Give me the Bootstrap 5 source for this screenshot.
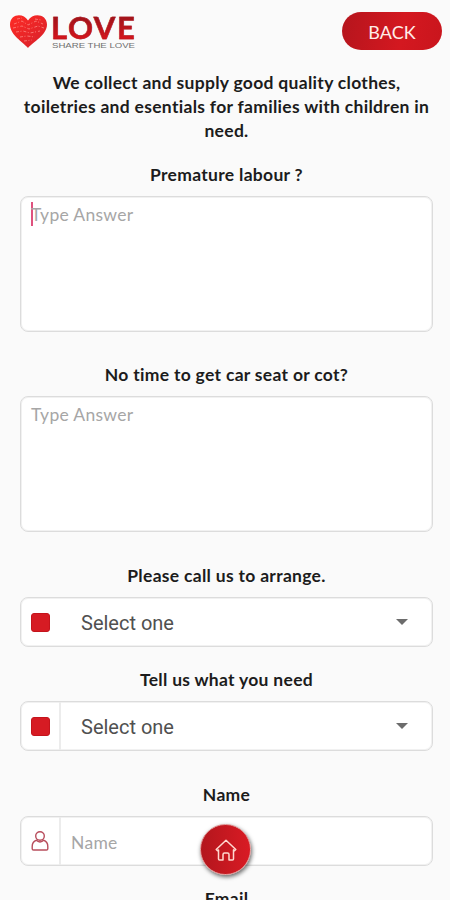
<!DOCTYPE html>
<html lang="en">
<head>
<meta charset="utf-8">
<meta name="viewport" content="width=device-width, initial-scale=1">
<title>Love - Share the Love</title>
<link href="https://cdn.jsdelivr.net/npm/bootstrap@5.3.0/dist/css/bootstrap.min.css" rel="stylesheet">
<style>
body{background:#fafafa;color:#1c1c1c;font-family:Lato,"Open Sans",sans-serif;}
.screen{width:450px;height:900px;}
.topbar{height:71px;padding:10px 8px 0 9px;}
.heart{margin-top:1px;}
.word{font:bold 31px/26px Lato,sans-serif;letter-spacing:1.6px;margin:4px 0 0 -1px;-webkit-text-stroke:.4px #ad161c;background:linear-gradient(#98131a,#d8151c);-webkit-background-clip:text;background-clip:text;color:transparent;}
.back{width:100px;height:38px;margin-top:2px;border-radius:19px;background:linear-gradient(100deg,#b5151d,#d41820 60%,#c9151d);color:#ffece8;font-size:18px;line-height:40px;}
.form-area{padding:0 17px 0 20px;}
.q{font-size:17.500px;line-height:24px;font-weight:700;letter-spacing:.3px;margin:0 0 9px;white-space:nowrap;}
.intro{margin-bottom:20px;}
.box{border:1px solid #dcdcdc;box-shadow:inset 0 0 0 1px #f1f1f1;border-radius:8px;background:#fff;}
.area{height:136px;padding:6px 9px 6px 10px;}
.line{height:50px;}
.gap-m{margin-bottom:31px;}
.gap-l{margin-bottom:32px;}
.gap-s{margin-bottom:21px;}
.hint{color:#a6a6a6;font-size:17.500px;line-height:24px;letter-spacing:.3px;}
.caret{width:2px;height:24px;margin:-1px -2px 0 0;background:#df527e;}
.lead-cell{width:40px;border-right:2px solid transparent;}
.ruled{border-right-color:#ececec;}
.sq{width:19px;height:19px;border-radius:3px;background:#d61b23;border:1px solid #c4141c;}
.pick{font:20px/24px Roboto,sans-serif;color:#505050;padding:1px 0 0 20px;}
.arrow{border:6px solid transparent;border-top-color:#6c6c6c;border-bottom:0;margin-right:24px;}
.name-hint{padding:3px 0 0 10px;}
.home{left:200px;top:824px;width:51px;height:51px;background:linear-gradient(90deg,#b3161d,#d91b24);border:1px solid #dc8d8c;box-shadow:1px 2px 4px rgba(0,0,0,.6);}
</style>
<script src="https://cdn.jsdelivr.net/npm/bootstrap@5.3.0/dist/js/bootstrap.bundle.min.js"></script>
</head>
<body>
<div class="screen position-relative overflow-hidden">
  <header class="topbar d-flex justify-content-between align-items-start">
    <div class="d-flex">
      <svg class="heart" width="39" height="40" viewBox="0 0 39 40" aria-hidden="true">
        <defs><linearGradient id="hg" x2="1" y2="1"><stop stop-color="#ff2b25"/><stop offset="1" stop-color="#d5202b"/></linearGradient></defs>
        <path d="M19 37C14 31 1 24 1 13.500 1 3 14 1 19 9.500 24 1 38 3 38 13.500 38 24 24 31 19 37Z" fill="url(#hg)"/>
        <g fill="none" stroke="#ff9d96" stroke-width="1" opacity=".65" stroke-dasharray="3 1.500 1 2"><path d="M5 13l8-3 6 4 8-4 7 3M4 17l9-2 7 3 9-3 6 2M7 21l7-1 7 2 10-2M11 26l7-1 8 1M15 30l8-1M8 8l5-1M26 8l6 1"/></g>
      </svg>
      <div class="d-flex flex-column ps-1">
        <span class="word">LOVE</span>
        <svg width="86" height="9"><text x="0" y="7.500" textLength="83" lengthAdjust="spacingAndGlyphs" font-family="Liberation Sans" font-size="7.500" fill="#707070">SHARE THE LOVE</text></svg>
      </div>
    </div>
    <button class="back btn border-0 p-0">BACK</button>
  </header>
  <main class="form-area text-center">
    <p class="q intro">We collect and supply good quality clothes,<br>toiletries and esentials for families with children in<br>need.</p>
    <p class="q">Premature labour ?</p>
    <div class="box area gap-m d-flex align-items-start"><span class="caret"></span><span class="hint">Type Answer</span></div>
    <p class="q">No time to get car seat or cot?</p>
    <div class="box area gap-l d-flex align-items-start"><span class="hint">Type Answer</span></div>
    <p class="q">Please call us to arrange.</p>
    <div class="box line gap-s d-flex align-items-stretch">
      <div class="lead-cell d-flex align-items-center justify-content-center"><span class="sq"></span></div>
      <div class="flex-grow-1 d-flex align-items-center justify-content-between"><span class="pick">Select one</span><span class="arrow"></span></div>
    </div>
    <p class="q">Tell us what you need</p>
    <div class="box line gap-l d-flex align-items-stretch">
      <div class="lead-cell ruled d-flex align-items-center justify-content-center"><span class="sq"></span></div>
      <div class="flex-grow-1 d-flex align-items-center justify-content-between"><span class="pick">Select one</span><span class="arrow"></span></div>
    </div>
    <p class="q">Name</p>
    <div class="box line gap-s d-flex align-items-stretch">
      <div class="lead-cell ruled d-flex align-items-center justify-content-center">
        <svg width="18" height="22" viewBox="0 0 18 22" fill="none" stroke="#b84d5c" stroke-width="1.400"><circle cx="9" cy="6" r="4.300"/><path d="M5.500 10.200C2.500 11 1.200 13.300 1.200 16.500v2.200q0 1.300 1.300 1.300h13q1.300 0 1.300-1.300v-2.200c0-3.200-1.300-5.500-4.300-6.300-1.600 2.300-5.400 2.300-7 0Z"/></svg>
      </div>
      <span class="hint name-hint align-self-center">Name</span>
    </div>
    <p class="q">Email</p>
  </main>
  <a href="#" class="home position-absolute rounded-circle d-flex align-items-center justify-content-center" aria-label="Home">
    <svg width="22" height="22" viewBox="0 0 22 22" fill="none" stroke="#ffd9d0" stroke-width="1.500" stroke-linejoin="round" stroke-linecap="round"><path d="M1.200 10.500 11 1.200l9.800 9.300-1.300 1.300-1-.9V20q0 1-1 1H14v-5.500q0-1.500-1.500-1.500h-3Q8 14 8 15.500V21H4.500q-1 0-1-1v-9.100l-1 .9Z"/></svg>
  </a>
</div>
</body>
</html>
